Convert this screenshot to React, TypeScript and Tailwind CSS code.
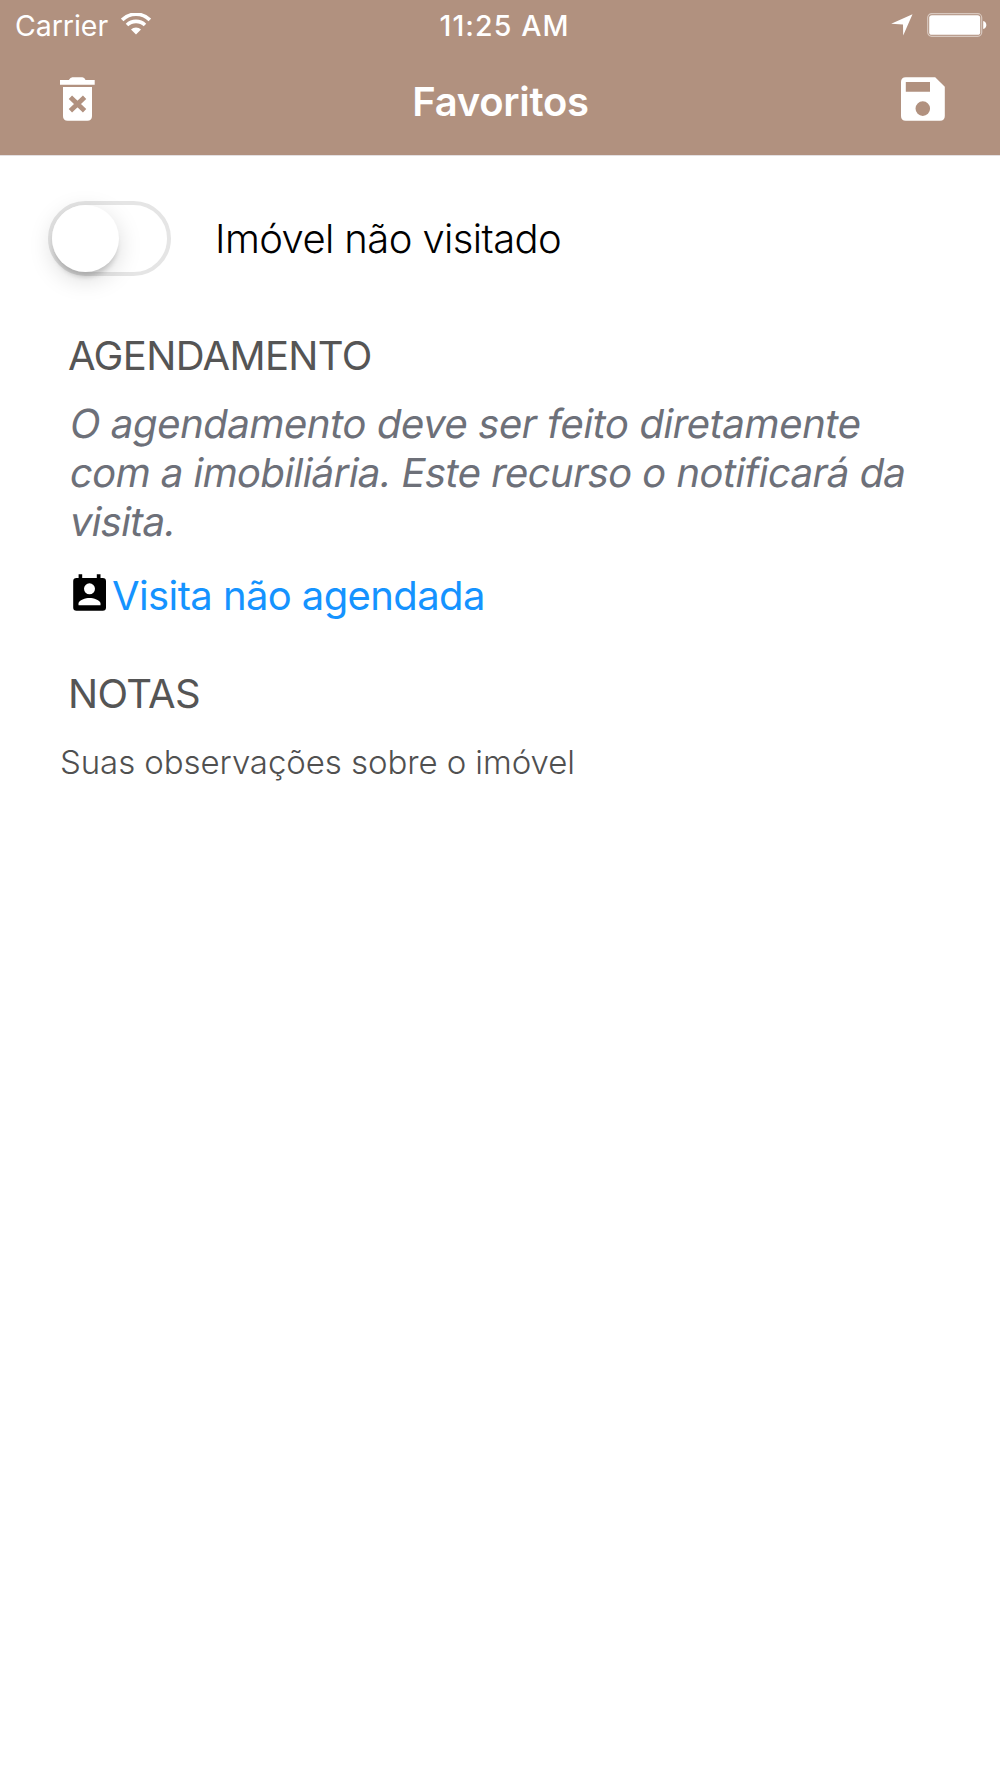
import React from "react";

function WifiIcon() {
  return (
    <svg width="30" height="22" viewBox="0 0 30 22" fill="none" stroke="#fff">
      <path d="M1.2 6.9 A19.5 19.5 0 0 1 28.8 6.9" strokeWidth="3.6" />
      <path d="M6 12 A13 13 0 0 1 24 12" strokeWidth="3.6" />
      <path d="M10 16.6 A7 7 0 0 1 20 16.6 L15 21.6 Z" fill="#fff" stroke="none" />
    </svg>
  );
}

function LocationIcon() {
  return (
    <svg width="22" height="22" viewBox="0 0 22 22" fill="#fff">
      <path d="M21.5 0.2 L12.2 21.5 L12 10.6 L0.2 9.8 Z" />
    </svg>
  );
}

function BatteryIcon() {
  return (
    <svg width="60" height="24" viewBox="0 0 60 24">
      <rect x="0.7" y="0.7" width="54" height="22.6" rx="4" fill="none" stroke="#fff" strokeOpacity="0.5" strokeWidth="1.2" />
      <rect x="2.2" y="2.2" width="51" height="19.6" rx="2.6" fill="#fff" />
      <path d="M56.2 8 C60.4 9 60.4 15 56.2 16 Z" fill="#fff" />
    </svg>
  );
}

function TrashIcon() {
  return (
    <svg width="36" height="44" viewBox="0 0 36 44" fill="#fff">
      <path d="M1 2.9 H9.8 Q11.4 0.3 13.4 0.3 H23.4 Q25.4 0.3 26.6 2.9 H35.7 V7.7 H1 Z" />
      <path d="M4 10 H33 V39 Q33 43.8 28.3 43.8 H8.7 Q4 43.8 4 39 Z" />
      <path d="M11.4 20.2 L25.6 33.8 M25.6 20.2 L11.4 33.8" stroke="#b1917f" strokeWidth="4.8" />
    </svg>
  );
}

function SaveIcon() {
  return (
    <svg width="44" height="44" viewBox="0 0 44 44">
      <path
        fill="#fff"
        fillRule="evenodd"
        d="M4.8 0.2 H34.2 L43.8 9.8 V39 Q43.8 43.8 39 43.8 H4.8 Q0 43.8 0 39 V5 Q0 0.2 4.8 0.2 Z M4.8 5 V14.7 H29 V5 Z M21.8 24.3 A7.3 7.3 0 1 0 21.8 38.9 A7.3 7.3 0 1 0 21.8 24.3 Z"
      />
    </svg>
  );
}

function ContactCalendarIcon() {
  return (
    <svg width="34" height="37" viewBox="0 0 34 37">
      <path d="M5.6 0.3 H9.2 V4 H23.8 V0.3 H27.5 V4 H29.7 Q33 4 33 7.3 V33.4 Q33 36.7 29.7 36.7 H3.5 Q0.2 36.7 0.2 33.4 V7.3 Q0.2 4 3.5 4 H5.6 Z" />
      <circle cx="16.5" cy="14.8" r="5.5" fill="#fff" />
      <path d="M5.5 31.2 V29.5 C5.5 25.9 12.8 23.9 16.5 23.9 S27.5 25.9 27.5 29.5 V31.2 Z" fill="#fff" />
    </svg>
  );
}

function Toggle() {
  return (
    <button
      role="switch"
      aria-checked={false}
      className="h-[75px] w-[123px] shrink-0 rounded-full border-4 border-[#e5e5e5] bg-white"
    >
      <span className="block size-[67px] rounded-full bg-white shadow-[0_7px_24px_rgba(0,0,0,0.15),0_7px_5px_-2px_rgba(0,0,0,0.16)]" />
    </button>
  );
}

export default function App() {
  return (
    <div className="min-h-[1778px] w-full bg-white font-['Inter',sans-serif] text-[40px] leading-[50px] text-black">
      <header className="h-[156px] border-b border-[#e4e0e2] bg-[#b1917f] text-white">
        <div className="grid h-[50px] grid-cols-3 pr-[13px] pl-[15px] text-[28.5px]">
          <div className="flex gap-[13px]">
            <span className="pt-px tracking-[-0.05px]">Carrier</span>
            <span className="pt-[13px]"><WifiIcon /></span>
          </div>
          <span className="pt-px pl-[7px] text-center font-medium tracking-[1.1px]">11:25 AM</span>
          <div className="flex items-start justify-end gap-[14px] pt-[13px]">
            <span className="pt-[1px]"><LocationIcon /></span>
            <BatteryIcon />
          </div>
        </div>
        <nav className="flex h-[98px] items-center justify-between pr-[55px] pl-[59px]">
          <TrashIcon />
          <h1 className="pt-[5px] pl-[5px] font-semibold tracking-[-0.28px]">Favoritos</h1>
          <SaveIcon />
        </nav>
      </header>

      <main>
        <div className="flex h-[164px] items-center gap-[44px] pl-[48px]">
          <Toggle />
          <span className="pt-px font-light tracking-[-0.6px]">Imóvel não visitado</span>
        </div>

        <section className="pt-[11px] pl-[68px]">
          <h2 className="tracking-[-0.65px] text-[#555]">AGENDAMENTO</h2>
          <p className="pt-[18px] leading-[49px] whitespace-nowrap text-[#6d7079]">
            <span className="block w-max origin-[0_80%] -skew-x-10 tracking-[-0.41px]">O agendamento deve ser feito diretamente</span>
            <span className="block w-max origin-[0_80%] -skew-x-10 tracking-[-0.56px]">com a imobiliária. Este recurso o notificará da</span>
            <span className="block w-max origin-[0_80%] -skew-x-10 tracking-[-0.7px]">visita.</span>
          </p>
          <div className="flex pt-[25px] pl-[5px]">
            <span className="pt-[3px]"><ContactCalendarIcon /></span>
            <a className="pl-[5px] tracking-[-0.6px] text-[#1593ff]">Visita não agendada</a>
          </div>
        </section>

        <section className="pt-[48px]">
          <h2 className="pl-[68px] tracking-[-0.64px] text-[#555]">NOTAS</h2>
          <p className="pt-[18px] pl-[60px] text-[33px] font-light tracking-[-0.08px] text-[#505050]">Suas observações sobre o imóvel</p>
        </section>
      </main>
    </div>
  );
}
